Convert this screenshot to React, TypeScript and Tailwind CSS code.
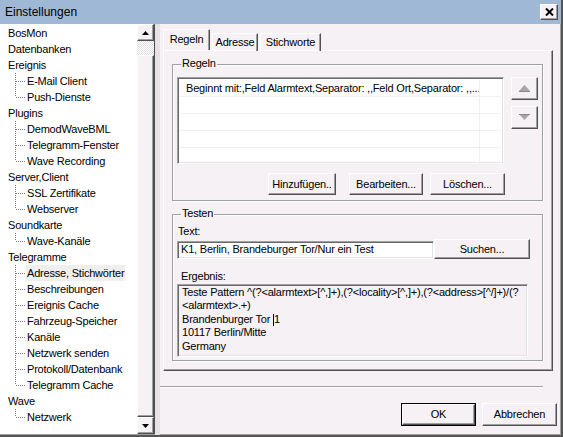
import React from 'react';

interface TreeNode {
    label: string;
    children?: string[];
}

const TREE: TreeNode[] = [
    { label: 'BosMon' },
    { label: 'Datenbanken' },
    { label: 'Ereignis', children: ['E-Mail Client', 'Push-Dienste'] },
    { label: 'Plugins', children: ['DemodWaveBML', 'Telegramm-Fenster', 'Wave Recording'] },
    { label: 'Server,Client', children: ['SSL Zertifikate', 'Webserver'] },
    { label: 'Soundkarte', children: ['Wave-Kanäle'] },
    {
        label: 'Telegramme',
        children: [
            'Adresse, Stichwörter',
            'Beschreibungen',
            'Ereignis Cache',
            'Fahrzeug-Speicher',
            'Kanäle',
            'Netzwerk senden',
            'Protokoll/Datenbank',
            'Telegramm Cache',
        ],
    },
    { label: 'Wave', children: ['Netzwerk'] },
];

// classic 3D borders
const raised =
    'bg-[#f5f1f5] border border-t-white border-l-white border-r-[#505050] border-b-[#505050] shadow-[inset_-1px_-1px_0_#a0a0a0]';
const sunken =
    'border border-t-[#a0a0a0] border-l-[#a0a0a0] border-r-white border-b-white shadow-[inset_1px_1px_0_#696969,inset_-1px_-1px_0_#e3e3e3]';
const etched = 'border border-[#a0a0a0] shadow-[inset_1px_1px_0_#fff,1px_1px_0_#fff]';

const Connector: React.FC<{ last: boolean }> = ({ last }) => (
    <svg width="26" height="16" className="shrink-0">
        <line x1="15.5" y1="0" x2="15.5" y2={last ? 8 : 16} stroke="#808080" strokeDasharray="1 1" />
        <line x1="16" y1="8.5" x2="25" y2="8.5" stroke="#808080" strokeDasharray="1 1" />
    </svg>
);

const Tree: React.FC = () => (
    <div className="w-[137px] bg-white pt-[1px] overflow-hidden">
        {TREE.map((node) => (
            <div key={node.label}>
                <div className="h-[16px] leading-[16px] pl-[8px] whitespace-nowrap">{node.label}</div>
                {node.children?.map((c, i) => (
                    <div key={c} className="h-[16px] leading-[16px] flex whitespace-nowrap">
                        <Connector last={i === node.children!.length - 1} />
                        <span className={c === 'Adresse, Stichwörter' ? 'bg-[#efefef] px-[1px]' : 'px-[1px]'}>
                            {c}
                        </span>
                    </div>
                ))}
            </div>
        ))}
    </div>
);

const ScrollArrow: React.FC<{ down?: boolean }> = ({ down }) => (
    <svg width="7" height="4" viewBox="0 0 7 4">
        <polygon points={down ? '0,0 7,0 3.5,4' : '0,4 7,4 3.5,0'} fill="#000" />
    </svg>
);

const Scrollbar: React.FC = () => (
    <div className="w-[18px] flex flex-col border-r border-[#505050]">
        <div className={`h-[17px] flex items-center justify-center ${raised}`}>
            <ScrollArrow />
        </div>
        <div className="h-[14px] bg-[repeating-conic-gradient(#ffffff_0%_25%,#e2dee2_0%_50%)] bg-[length:2px_2px]" />
        <div className={`flex-1 ${raised}`} />
        <div className={`h-[17px] flex items-center justify-center ${raised}`}>
            <ScrollArrow down />
        </div>
    </div>
);

const GrayArrow: React.FC<{ down?: boolean }> = ({ down }) => (
    <svg width="11" height="7" viewBox="0 0 11 7">
        <polygon points={down ? '0,0 11,0 5.5,6' : '0,6 11,6 5.5,0'} fill="#a8a4a8" />
        <polygon points={down ? '0,0 11,0 11,1 0,1' : '0,6 11,6 11,7 0,7'} fill="#8c888c" />
    </svg>
);

const Group: React.FC<{ label: string; className?: string; children: React.ReactNode }> = ({
    label,
    className,
    children,
}) => (
    <div className={`relative ${etched} ${className ?? ''}`}>
        <span className="absolute left-[8px] top-[-8px] bg-[#f5f1f5] px-[1px] leading-[13px]">{label}</span>
        {children}
    </div>
);

const Button: React.FC<{ className?: string; children: React.ReactNode }> = ({ className, children }) => (
    <div className={`flex items-center justify-center ${raised} ${className ?? ''}`}>{children}</div>
);

export default function App() {
    return (
        <div className="w-[563px] h-[437px] bg-[#f5f1f5] flex flex-col font-['Liberation_Sans',Arial,sans-serif] text-[11px] tracking-[-0.2px] text-black border-r-2 border-b-2 border-[#555] shadow-[inset_-1px_-1px_0_#a0a0a0] overflow-hidden">
            {/* Title bar */}
            <div className="h-[24px] shrink-0 bg-[#9eb8d6] flex items-center pl-[5px] pr-[3px]">
                <span className="text-[12px] tracking-normal flex-1">Einstellungen</span>
                <div className={`w-[18px] h-[16px] flex items-center justify-center ${raised}`}>
                    <svg width="9" height="8" viewBox="0 0 9 8">
                        <path d="M1 0.5 L8 7.5 M8 0.5 L1 7.5" stroke="#000" strokeWidth="2" />
                    </svg>
                </div>
            </div>

            <div className="flex-1 flex min-h-0">
                {/* Left: tree */}
                <div className="flex pb-[1px]">
                    <Tree />
                    <Scrollbar />
                </div>
                <div className="w-[5px] bg-[#e6e2e6]" />

                {/* Right */}
                <div className="flex-1 flex flex-col">
                    <div className="flex items-end pt-[5px] pl-[3px] h-[26px] relative z-10">
                        <div className="w-[47px] h-[21px] bg-[#f5f1f5] border-t border-l border-white border-r border-r-[#505050] shadow-[inset_-1px_0_0_#a0a0a0] flex items-center justify-center pb-[2px]">
                            Regeln
                        </div>
                        <div className="ml-[2px] w-[46px] h-[18px] -mb-px border-t border-l border-white border-r border-r-[#505050] shadow-[inset_-1px_0_0_#a0a0a0] flex items-center justify-center">
                            Adresse
                        </div>
                        <div className="ml-[2px] w-[61px] h-[18px] -mb-px border-t border-l border-white border-r border-r-[#505050] shadow-[inset_-1px_0_0_#a0a0a0] flex items-center justify-center">
                            Stichworte
                        </div>
                    </div>

                    <div className="ml-[3px] w-[390px] h-[321px] border border-t-white border-l-white border-r-[#505050] border-b-[#505050] shadow-[inset_-1px_-1px_0_#a0a0a0] pt-[13px] pl-[8px]">
                        <Group label="Regeln" className="w-[371px] h-[137px] pt-[12px] pl-[4px]">
                            <div className="flex">
                                <div className={`w-[327px] h-[87px] bg-white p-[2px] ${sunken}`}>
                                    <div className="relative h-full">
                                        {[0, 1, 2, 3, 4].map((i) => (
                                            <div key={i} className="h-[17px] border-b border-[#f0f0f0] flex">
                                                <div className="w-[300px] border-r border-[#f0f0f0] pl-[6px] leading-[16px] whitespace-nowrap overflow-hidden">
                                                    {i === 0 ? 'Beginnt mit:,Feld Alarmtext,Separator: ,,Feld Ort,Separator: ,,...' : ''}
                                                </div>
                                            </div>
                                        ))}
                                    </div>
                                </div>
                                <div className="ml-[7px] flex flex-col gap-[6px]">
                                    <Button className="w-[27px] h-[23px]">
                                        <GrayArrow />
                                    </Button>
                                    <Button className="w-[27px] h-[23px]">
                                        <GrayArrow down />
                                    </Button>
                                </div>
                            </div>
                            <div className="flex mt-[9px] ml-[91px]">
                                <Button className="w-[68px] h-[22px]">Hinzufügen..</Button>
                                <Button className="ml-[13px] w-[74px] h-[22px]">Bearbeiten...</Button>
                                <Button className="ml-[7px] w-[75px] h-[22px]">Löschen...</Button>
                            </div>
                        </Group>

                        <Group label="Testen" className="mt-[13px] w-[371px] h-[147px] pt-[10px] pl-[4px]">
                            <div className="leading-[13px] pl-[1px]">Text:</div>
                            <div className="flex items-end mt-[1px]">
                                <div className={`w-[257px] h-[18px] bg-white pl-[3px] leading-[15px] whitespace-nowrap ${sunken}`}>
                                    K1, Berlin, Brandeburger Tor/Nur ein Test
                                </div>
                                <Button className="w-[96px] h-[20px]">Suchen...</Button>
                            </div>
                            <div className="leading-[13px] pl-[4px] mt-[11px]">Ergebnis:</div>
                            <div className={`mt-[1px] w-[351px] h-[73px] bg-[#f5f1f5] pl-[4px] pt-[1px] leading-[13.4px] ${sunken}`}>
                                <div className="whitespace-pre">Teste Pattern ^(?&lt;alarmtext&gt;[^,]+),(?&lt;locality&gt;[^,]+),(?&lt;address&gt;[^/]+)/(?</div>
                                <div className="whitespace-pre">&lt;alarmtext&gt;.+)</div>
                                <div className="whitespace-pre flex items-center">
                                    Brandenburger Tor <span className="w-px h-[12px] bg-black" />1
                                </div>
                                <div className="whitespace-pre">10117 Berlin/Mitte</div>
                                <div className="whitespace-pre">Germany</div>
                            </div>
                        </Group>
                    </div>

                    <div className="mt-[15px] w-[383px] border-t border-[#a0a0a0] shadow-[0_1px_0_#fff]" />

                    <div className="mt-[16px] flex justify-end gap-[6px] pr-[4px]">
                        <div className="w-[75px] h-[23px] border border-black">
                            <Button className="w-full h-full">OK</Button>
                        </div>
                        <Button className="w-[75px] h-[23px]">Abbrechen</Button>
                    </div>
                </div>
            </div>
        </div>
    );
}
